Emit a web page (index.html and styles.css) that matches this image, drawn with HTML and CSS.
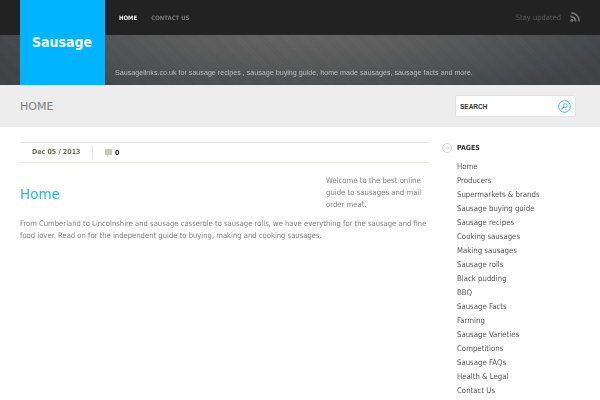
FILE: index.html
```html
<!DOCTYPE html>
<html lang="en">
<head>
<meta charset="utf-8">
<title>Sausage</title>
<link rel="stylesheet" href="styles.css">
</head>
<body>
<header class="site-header">
  <a class="logo" href="#">Sausage</a>
  <div class="header-main">
    <div class="top-row">
      <nav class="nav">
        <a class="nav-link active" href="#">HOME</a>
        <a class="nav-link" href="#">CONTACT US</a>
      </nav>
      <div class="stay">
        <span>Stay updated</span>
        <svg class="rss" width="10" height="10" viewBox="0 0 12 12"><circle cx="2.2" cy="9.8" r="1.8" fill="#777"/><path d="M0.5 5.2a6.2 6.2 0 0 1 6.3 6.3" fill="none" stroke="#777" stroke-width="2"/><path d="M1.5 1a9.6 9.6 0 0 1 9.5 10" fill="none" stroke="#777" stroke-width="2"/></svg>
      </div>
    </div>
    <p class="tagline">Sausagelinks.co.uk for sausage recipes , sausage buying guide, home made sausages, sausage facts and more.</p>
  </div>
</header>
<div class="title-bar">
  <h2 class="page-title">HOME</h2>
  <form class="search">
    <span class="search-label">SEARCH</span>
    <svg class="search-icon" width="13" height="13" viewBox="0 0 13 13"><circle cx="6.5" cy="6.5" r="5.8" fill="#fff" stroke="#3fbdf0" stroke-width="1"/><circle cx="7.3" cy="5.6" r="1.9" fill="none" stroke="#3fbdf0" stroke-width="1"/><path d="M6 7l-2.3 2.3" stroke="#3fbdf0" stroke-width="1.2"/></svg>
  </form>
</div>
<div class="content">
  <main class="main">
    <div class="meta">
      <span class="date">Dec 05 / 2013</span>
      <span class="comments">
        <svg class="bubble" width="7" height="8" viewBox="0 0 7 8"><path d="M0 0h7v6H3.5L2 8V6H0z" fill="#c9c9c0"/></svg>
        <b>0</b>
      </span>
    </div>
    <div class="post">
      <p class="aside">Welcome to the best online guide to sausages and mail order meat.</p>
      <h1 class="post-title">Home</h1>
      <p class="body">From Cumberland to Lincolnshire and sausage casserole to sausage rolls, we have everything for the sausage and fine food lover. Read on for the independent guide to buying, making and cooking sausages.</p>
    </div>
  </main>
  <aside class="sidebar">
    <h3 class="side-title">
      <svg class="side-icon" width="10" height="10" viewBox="0 0 10 10"><circle cx="5" cy="5" r="4.5" fill="none" stroke="#ccc" stroke-width="0.8"/><path d="M2.6 5h4.6M5.6 3.4L7.2 5 5.6 6.6" fill="none" stroke="#ccc" stroke-width="0.7"/></svg>
      PAGES
    </h3>
    <ul class="pages">
      <li>Home</li>
      <li>Producers</li>
      <li>Supermarkets &amp; brands</li>
      <li>Sausage buying guide</li>
      <li>Sausage recipes</li>
      <li>Cooking sausages</li>
      <li>Making sausages</li>
      <li>Sausage rolls</li>
      <li>Black pudding</li>
      <li>BBQ</li>
      <li>Sausage Facts</li>
      <li>Farming</li>
      <li>Sausage Varieties</li>
      <li>Competitions</li>
      <li>Sausage FAQs</li>
      <li>Health &amp; Legal</li>
      <li>Contact Us</li>
    </ul>
  </aside>
</div>
</body>
</html>
```
FILE: styles.css
```css
* { box-sizing: border-box; }
html, body { margin: 0; padding: 0; height: 400px; overflow: hidden; background: #fff; }
body { font-family: "DejaVu Sans", sans-serif; font-stretch: condensed; font-size: 8px; color: #666; }
a { text-decoration: none; color: inherit; }

.site-header {
  display: flex;
  height: 85px;
  padding-left: 20px;
  background:
    linear-gradient(#222, #222) top / 100% 35px no-repeat,
    repeating-linear-gradient(45deg, rgba(255,255,255,0.02) 0 1px, rgba(0,0,0,0.02) 1px 2px),
    radial-gradient(ellipse 340px 90px at 300px 20px, #666 0%, #5c5c5c 40%, #474a4c 85%, #404244 100%);
}
.logo {
  width: 85px;
  height: 85px;
  background: #00b4ff;
  color: #f2fbff;
  font-size: 14px;
  font-weight: bold;
  line-height: 14px;
  padding: 35px 0 0 12px;
}
.header-main { flex: 1; display: flex; flex-direction: column; will-change: opacity; }
.top-row { height: 35px; display: flex; align-items: center; justify-content: space-between; }
.nav { display: flex; gap: 14px; padding: 0 0 0 14px; }
.nav-link { font-size: 6px; font-weight: bold; color: #7a7a7a; }
.nav-link.active { color: #f5f5f5; }
.stay { display: flex; align-items: center; gap: 9px; padding-right: 20px; font-size: 7.5px; color: #5a5a5a; margin-top: -1px; }
.tagline { margin: 34px 0 0 10px; font-family: "Liberation Sans", sans-serif; font-size: 7.15px; line-height: 9px; color: #bdbdbd; }

.title-bar {
  height: 42px;
  background: #ededed;
  display: flex;
  align-items: center;
  justify-content: space-between;
  padding: 0 24px 0 20px;
}
.page-title { margin: 0; font-size: 11px; font-stretch: normal; font-weight: normal; color: #808080; }
.search {
  width: 121px;
  height: 22px;
  background: #fff;
  border: 1px solid #e2e2e2;
  border-radius: 2px;
  display: flex;
  align-items: center;
  justify-content: space-between;
  padding: 0 4px;
}
.search-label { font-family: "Liberation Sans", sans-serif; font-size: 6.5px; font-weight: bold; color: #333; }

.content { display: flex; padding: 15px 0 0 20px; will-change: opacity; }
.main { width: 409px; }
.meta {
  height: 21px;
  border-top: 1px solid #e8e8e2;
  border-bottom: 1px solid #e8e8e2;
  display: flex;
  align-items: center;
  font-size: 7px;
}
.date { width: 73px; padding-left: 12px; font-weight: bold; color: #6e6e60; border-right: 1px solid #e6e6e0; line-height: 13px; }
.comments { display: flex; align-items: center; gap: 3px; padding-left: 12px; }
.comments b { color: #222; }
.post { padding-top: 12px; }
.aside { float: right; width: 103px; margin: 0; line-height: 12px; color: #808080; font-size: 7.7px; }
.post-title { margin: 0; padding-top: 9px; font-size: 13.5px; font-stretch: normal; line-height: 20px; font-weight: normal; color: #1fb8ee; }
.body { clear: both; margin: 0; padding-top: 7px; line-height: 12px; color: #808080; font-size: 7.6px; }

.sidebar { margin-left: 13px; width: 158px; padding-top: 1px; }
.side-title { display: flex; align-items: center; gap: 5px; margin: 0 0 7px; font-size: 7px; line-height: 10px; font-weight: bold; color: #333; }
.pages { list-style: none; margin: 0; padding: 0 0 0 15px; font-size: 7.75px; color: #555; }
.pages li { height: 14px; line-height: 14px; white-space: nowrap; }
```
